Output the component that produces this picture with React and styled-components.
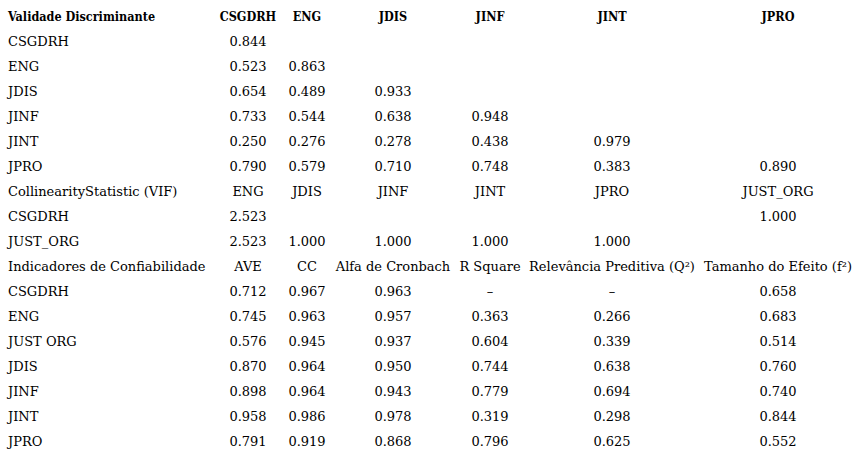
import styled, { createGlobalStyle } from "styled-components";

const COLUMN_WIDTHS = [204, 72, 46, 126, 68, 176, 156];

const SECTIONS = [
  {
    title: "Validade Discriminante",
    bold: true,
    headers: ["CSGDRH", "ENG", "JDIS", "JINF", "JINT", "JPRO"],
    rows: [
      ["CSGDRH", "0.844"],
      ["ENG", "0.523", "0.863"],
      ["JDIS", "0.654", "0.489", "0.933"],
      ["JINF", "0.733", "0.544", "0.638", "0.948"],
      ["JINT", "0.250", "0.276", "0.278", "0.438", "0.979"],
      ["JPRO", "0.790", "0.579", "0.710", "0.748", "0.383", "0.890"],
    ],
  },
  {
    title: "CollinearityStatistic (VIF)",
    headers: ["ENG", "JDIS", "JINF", "JINT", "JPRO", "JUST_ORG"],
    rows: [
      ["CSGDRH", "2.523", "", "", "", "", "1.000"],
      ["JUST_ORG", "2.523", "1.000", "1.000", "1.000", "1.000"],
    ],
  },
  {
    title: "Indicadores de Confiabilidade",
    headers: [
      "AVE",
      "CC",
      "Alfa de Cronbach",
      "R Square",
      "Relevância Preditiva (Q²)",
      "Tamanho do Efeito (f²)",
    ],
    rows: [
      ["CSGDRH", "0.712", "0.967", "0.963", "–", "–", "0.658"],
      ["ENG", "0.745", "0.963", "0.957", "0.363", "0.266", "0.683"],
      ["JUST ORG", "0.576", "0.945", "0.937", "0.604", "0.339", "0.514"],
      ["JDIS", "0.870", "0.964", "0.950", "0.744", "0.638", "0.760"],
      ["JINF", "0.898", "0.964", "0.943", "0.779", "0.694", "0.740"],
      ["JINT", "0.958", "0.986", "0.978", "0.319", "0.298", "0.844"],
      ["JPRO", "0.791", "0.919", "0.868", "0.796", "0.625", "0.552"],
    ],
  },
];

export default function App() {
  return (
    <>
      <GlobalStyle />
      <Page>
        <Table>
          <colgroup>
            {COLUMN_WIDTHS.map((w, i) => (
              <col key={i} style={{ width: w }} />
            ))}
          </colgroup>
          <tbody>
            {SECTIONS.map((section) => (
              <Section key={section.title} section={section} />
            ))}
          </tbody>
        </Table>
      </Page>
    </>
  );
}

function Section({ section }) {
  return (
    <>
      <Row>
        <Label $bold={section.bold}>{section.title}</Label>
        {section.headers.map((h, i) => (
          <Cell key={i} $bold={section.bold}>
            {h}
          </Cell>
        ))}
      </Row>
      {section.rows.map((row) => (
        <Row key={row[0]}>
          <Label>{row[0]}</Label>
          {section.headers.map((_, i) => (
            <Cell key={i}>{row[i + 1] || ""}</Cell>
          ))}
        </Row>
      ))}
    </>
  );
}

const GlobalStyle = createGlobalStyle`
  body {
    margin: 0;
    background: #ffffff;
  }
`;

const Page = styled.div`
  padding: 4px 8px;
  font-family: "DejaVu Serif", "Liberation Serif", serif;
  font-size: 13px;
  color: #000000;
`;

const Table = styled.table`
  border-collapse: collapse;
  table-layout: fixed;
  width: 848px;
`;

const Row = styled.tr`
  height: 25px;
`;

const Label = styled.td`
  padding: 0;
  text-align: left;
  white-space: nowrap;
  font-weight: ${(p) => (p.$bold ? 700 : 400)};
  font-stretch: ${(p) => (p.$bold ? "condensed" : "normal")};
  font-size: ${(p) => (p.$bold ? "12.5px" : "13px")};
`;

const Cell = styled.td`
  padding: 0;
  text-align: center;
  white-space: nowrap;
  font-weight: ${(p) => (p.$bold ? 700 : 400)};
  font-stretch: ${(p) => (p.$bold ? "condensed" : "normal")};
  font-size: ${(p) => (p.$bold ? "12.5px" : "13px")};
`;
